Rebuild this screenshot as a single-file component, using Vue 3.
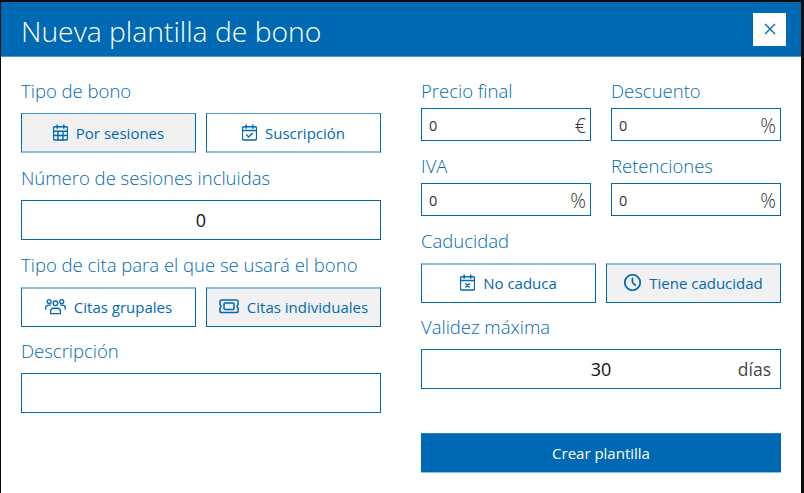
<template>
  <div class="modal">
    <header class="modal-header">
      <h1>Nueva plantilla de bono</h1>
      <button class="close-btn" aria-label="Cerrar">
        <svg width="12" height="12" viewBox="0 0 12 12"><path d="M1 1l10 10M11 1L1 11" /></svg>
      </button>
    </header>

    <div class="modal-body">
      <div class="col">
        <label class="field-label first">Tipo de bono</label>
        <div class="choice-row soft-bottom">
          <button class="choice active">
            <svg class="icon cal" viewBox="3 2 18 20"><rect x="3.500" y="5" width="17" height="16" rx="2" /><path d="M16 3v4M8 3v4M3.500 10.500h17M3.500 15.500h17M9 10.500V21M15 10.500V21" /></svg>
            Por sesiones
          </button>
          <button class="choice">
            <svg class="icon cal" viewBox="3 2 18 20"><rect x="3.500" y="5" width="17" height="16" rx="2" /><path d="M16 3v4M8 3v4M3.500 9.500h17M8.500 15l2.500 2.500 4.500-4.500" /></svg>
            Suscripción
          </button>
        </div>

        <label class="field-label">Número de sesiones incluidas</label>
        <input v-model="sessions" class="big-input center" />

        <label class="field-label">Tipo de cita para el que se usará el bono</label>
        <div class="choice-row soft-top">
          <button class="choice">
            <svg class="icon users" viewBox="0.500 2.500 23 19"><circle cx="12" cy="8.500" r="2.600" /><circle cx="5" cy="6.500" r="2.200" /><circle cx="19" cy="6.500" r="2.200" /><path d="M6.500 20v-2.500a3.500 3.500 0 0 1 3.500-3.500h4a3.500 3.500 0 0 1 3.500 3.500V20zM1 15v-1a3.500 3.500 0 0 1 3.500-3.500h2M23 15v-1a3.500 3.500 0 0 0-3.500-3.500h-2" /></svg>
            Citas grupales
          </button>
          <button class="choice active">
            <svg class="icon ticket" viewBox="1 4 22 16"><path d="M4 5h16a2 2 0 0 1 2 2v3.200a2 2 0 0 0 0 3.600V17a2 2 0 0 1-2 2H4a2 2 0 0 1-2-2v-3.200a2 2 0 0 0 0-3.600V7a2 2 0 0 1 2-2z" /><rect x="6.500" y="8.500" width="11" height="7" rx="1" /></svg>
            Citas individuales
          </button>
        </div>

        <label class="field-label snug">Descripción</label>
        <input v-model="description" class="big-input" />
      </div>

      <div class="col">
        <div class="price-grid">
          <div v-for="item in amounts" :key="item.label" class="price-field">
            <label class="field-label tight">{{ item.label }}</label>
            <div class="small-input">
              <input v-model="item.value" />
              <span class="unit">{{ item.unit }}</span>
            </div>
          </div>
        </div>

        <label class="field-label">Caducidad</label>
        <div class="choice-row soft-top">
          <button class="choice">
            <svg class="icon cal" viewBox="3 2 18 20"><rect x="3.500" y="5" width="17" height="16" rx="2" /><path d="M16 3v4M8 3v4M3.500 9.500h17M10 13.500l4 4M14 13.500l-4 4" /></svg>
            No caduca
          </button>
          <button class="choice active">
            <svg class="icon clock" viewBox="1 1 22 22"><circle cx="12" cy="12" r="10" /><path d="M12 6.500V12l3.500 3.500" /></svg>
            Tiene caducidad
          </button>
        </div>

        <label class="field-label snug">Validez máxima</label>
        <div class="days-input">
          <input v-model="days" class="center" />
          <span class="unit days">días</span>
        </div>

        <button class="submit">Crear plantilla</button>
      </div>
    </div>
  </div>
</template>

<script setup>
import { ref, reactive } from 'vue'

const sessions = ref('0')
const description = ref('')
const days = ref('30')

const amounts = reactive([
  { label: 'Precio final', value: '0', unit: '€' },
  { label: 'Descuento', value: '0', unit: '%' },
  { label: 'IVA', value: '0', unit: '%' },
  { label: 'Retenciones', value: '0', unit: '%' }
])
</script>

<style>
html,
body {
  background: #0c0c0c;
}
</style>

<style scoped>
.modal {
  width: 800px;
  height: 491px;
  margin: 2px 0 0 1px;
  background: #fff;
  font-family: "Open Sans", "Liberation Sans", sans-serif;
  overflow: hidden;
}

.modal-header {
  display: flex;
  align-items: center;
  justify-content: space-between;
  height: 54px;
  padding: 0 15px 0 20px;
  background: #0069b4;
  border-bottom: 1px solid #4d96cb;
}

.modal-header h1 {
  margin: 0;
  padding-top: 4px;
  font-size: 28.300px;
  font-weight: 300;
  color: #fff;
}

.close-btn {
  display: flex;
  align-items: center;
  justify-content: center;
  width: 33px;
  height: 33px;
  padding: 0;
  border: 0;
  background: #fff;
}

.close-btn svg {
  fill: none;
  stroke: #0069b4;
  stroke-width: 1.300;
}

.modal-body {
  display: grid;
  grid-template-columns: 360px 360px;
  gap: 40px;
  padding: 22px 20px 0;
}

.col {
  display: flex;
  flex-direction: column;
}

.field-label {
  display: block;
  height: 24px;
  margin: 13px 0 10px;
  font-size: 18.500px;
  font-weight: 300;
  line-height: 24px;
  color: #0069b4;
}

.field-label.first {
  margin-top: 0;
}

.field-label.snug {
  margin-top: 12px;
}

.field-label.tight {
  margin: 0 0 5px;
}

.choice-row {
  display: grid;
  grid-template-columns: 1fr 1fr;
  gap: 10px;
}

.choice {
  display: flex;
  align-items: center;
  justify-content: center;
  gap: 8px;
  height: 40px;
  padding: 0;
  background: #fff;
  border: 1px solid #0069b4;
  font-family: inherit;
  font-size: 15px;
  color: #0069b4;
}

.choice.active {
  background: #f1f1f1;
}

.soft-bottom .choice {
  border-top-color: #4d96cb;
  border-bottom: 2px solid #8fbfdf;
}

.soft-top .choice {
  padding-bottom: 2px;
  border-top: 2px solid #8fbfdf;
}

.icon {
  flex: none;
  fill: none;
  stroke: currentColor;
  stroke-width: 1.700;
  stroke-linecap: round;
  stroke-linejoin: round;
}

.icon.cal {
  width: 15px;
  height: 17px;
}

.icon.users {
  width: 21px;
  height: 17px;
  stroke-width: 1.500;
}

.icon.ticket {
  width: 20px;
  height: 14.500px;
  stroke-width: 1.700;
}

.icon.clock {
  width: 17px;
  height: 17px;
  stroke-width: 2.200;
}

input {
  min-width: 0;
  border: 0;
  outline: 0;
  background: transparent;
  font-family: inherit;
  color: #111;
}

.center {
  text-align: center;
}

.big-input {
  box-sizing: border-box;
  width: 100%;
  height: 40px;
  border: 1px solid #0069b4;
  font-size: 18px;
}

.price-grid {
  display: grid;
  grid-template-columns: 170px 170px;
  column-gap: 20px;
  row-gap: 13px;
}

.small-input {
  display: flex;
  align-items: center;
  box-sizing: border-box;
  height: 33px;
  padding: 2px 4px 0 7px;
  border: 1px solid #0069b4;
}

.small-input input {
  flex: 1;
  width: 100%;
  padding: 0;
  font-size: 14.500px;
  color: #333;
}

.unit {
  font-size: 19.500px;
  font-weight: 300;
  color: #333;
}

.days-input {
  position: relative;
  box-sizing: border-box;
  height: 40px;
  border: 1px solid #0069b4;
}

.days-input input {
  box-sizing: border-box;
  width: 100%;
  height: 100%;
  padding: 0;
  font-size: 18px;
}

.unit.days {
  position: absolute;
  top: 50%;
  right: 9px;
  font-size: 17.500px;
  font-weight: 400;
  color: #444;
  transform: translateY(-50%);
}

.submit {
  height: 40px;
  margin-top: 44px;
  padding: 0;
  background: #0069b4;
  border: 0;
  border-top: 1px solid #2a80bf;
  border-bottom: 1px solid #8fbfdf;
  font-family: inherit;
  font-size: 15px;
  color: #fff;
}
</style>
